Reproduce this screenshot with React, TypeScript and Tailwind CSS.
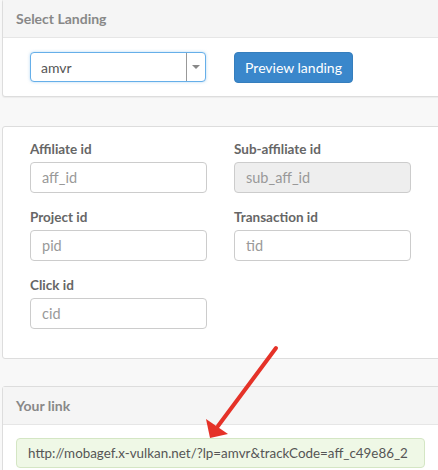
import React from "react";

const font = { fontFamily: "Lato, 'Open Sans', sans-serif" };

function Field({ label, value, disabled }: { label: string; value: string; disabled?: boolean }) {
  return (
    <div className="flex flex-col w-[177px]">
      <div className="text-[13.5px] font-bold text-[#666] leading-[20px] h-[20px] mb-[3px]">{label}</div>
      <div
        className={`h-[31px] border border-[#ccc] rounded-[4px] flex items-center pl-[11px] text-[14.5px] text-[#999] ${disabled ? "bg-[#eee]" : "bg-white"}`}
      >
        {value}
      </div>
    </div>
  );
}

export default function App() {
  return (
    <div className="relative w-[438px] h-[470px] bg-[#f8f8f8] overflow-hidden" style={font}>
      <div className="flex flex-col pl-[2px] w-[460px]">
        {/* Panel 1 */}
        <div className="border border-[#ddd] rounded-[3px] bg-white shadow-[0_1px_1px_rgba(0,0,0,0.05)] -mt-[1px]">
          <div className="h-[38px] bg-[#f5f5f5] border-b border-[#e6e6e6] flex items-center pl-[13px] text-[14px] font-bold text-[#888]">
            Select Landing
          </div>
          <div className="h-[58px] flex items-center pl-[27px] gap-[28px]">
            <div className="w-[176px] h-[30px] border border-[#66afe9] rounded-[4px] flex items-stretch bg-white shadow-[0_0_3px_rgba(102,175,233,0.5)]">
              <div className="flex-1 flex items-center pl-[10px] text-[14px] text-[#555]">amvr</div>
              <div className="w-[19px] border-l border-[#999] flex items-center justify-center">
                <div className="w-0 h-0 border-l-[4px] border-r-[4px] border-t-[4px] border-l-transparent border-r-transparent border-t-[#888]" />
              </div>
            </div>
            <div className="w-[119px] h-[31px] bg-[#3a87cb] border border-[#357ebd] rounded-[4px] flex items-center justify-center text-[14px] text-white">
              Preview landing
            </div>
          </div>
        </div>

        {/* Panel 2 */}
        <div className="mt-[29px] border border-[#ddd] rounded-[3px] bg-white h-[233px] pt-[12px] pl-[27px]">
          <div className="grid grid-cols-[177px_177px] gap-x-[27px] gap-y-[14px]">
            <Field label="Affiliate id" value="aff_id" />
            <Field label="Sub-affiliate id" value="sub_aff_id" disabled />
            <Field label="Project id" value="pid" />
            <Field label="Transaction id" value="tid" />
            <Field label="Click id" value="cid" />
          </div>
        </div>

        {/* Panel 3 */}
        <div className="mt-[27px] border border-[#ddd] rounded-[3px] bg-white h-[120px]">
          <div className="h-[38px] bg-[#f5f5f5] border-b border-[#e6e6e6] flex items-center pl-[13px] text-[14px] font-bold text-[#888]">
            Your link
          </div>
          <div className="pt-[13px] pl-[13px]">
            <div className="w-[409px] h-[30px] bg-[#eff8e6] border border-[#d4e6c4] rounded-[4px] flex items-center pl-[11px] text-[13.4px] text-[#555] whitespace-nowrap overflow-hidden">
              http://mobagef.x-vulkan.net/?lp=amvr&amp;trackCode=aff_c49e86_2
            </div>
          </div>
        </div>
      </div>

      {/* red arrow */}
      <svg className="absolute left-0 top-0 pointer-events-none" width="438" height="470">
        <line x1="276" y1="348" x2="218" y2="426" stroke="#e53228" strokeWidth="4" strokeLinecap="round" />
        <polygon points="210,438 206,419 228,434" fill="#e53228" />
      </svg>
    </div>
  );
}
